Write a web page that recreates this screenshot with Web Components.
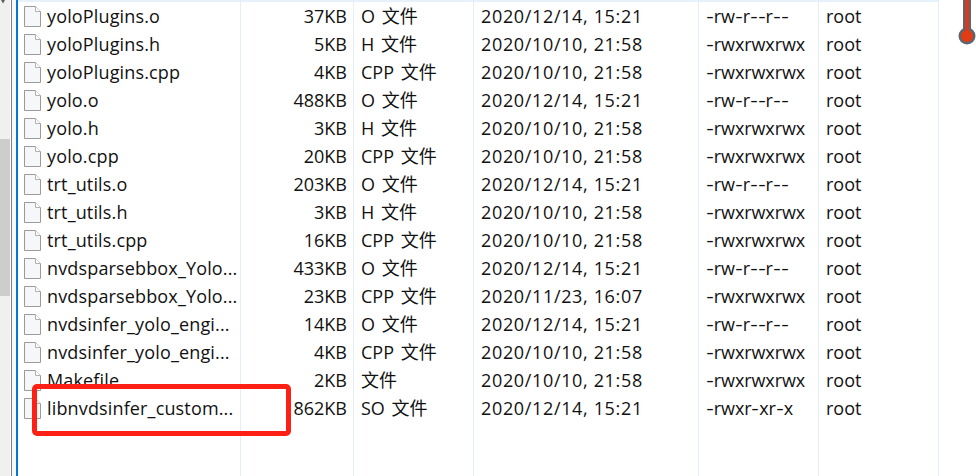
<!DOCTYPE html>
<html>
<head>
<meta charset="utf-8">
<style>
  html, body { margin: 0; height: 100%; background: #fff; overflow: hidden; }
</style>
</head>
<body>
<file-window></file-window>

<template id="tpl-row">
  <style>
    :host {
      display: grid;
      grid-template-columns: 241px 113px 120px 225px 120px 120px;
      height: 28px;
      align-items: center;
      font: 18px/24px "Open Sans", "Noto Sans CJK SC", sans-serif;
      color: #111;
      white-space: nowrap;
    }
    .name { display: flex; align-items: center; gap: 6px; padding-left: 24px; letter-spacing: .15px; }
    .size { text-align: right; padding-right: 7px; }
    .type, .date, .perm, .owner { padding-left: 7px; }
    .type { word-spacing: 2px; }
    .date { letter-spacing: .65px; }
    .perm { letter-spacing: -.1px; }
    .perm b { display: inline-block; width: 7.8px; font-weight: 400; letter-spacing: 0; text-align: center; transform: scaleX(1.3); }
    svg { flex: none; margin-top: 1px; }
  </style>
  <div class="name">
    <svg width="17" height="21" viewBox="0 0 17 21">
      <path d="M.5.5h11l5 5v15H.5z" fill="#f6f7f9" stroke="#9a9a9a"/>
      <path d="M11.5.5v5h5" fill="#fff" stroke="#b0b0b0"/>
    </svg>
    <span id="name"></span>
  </div>
  <div class="size" id="size"></div>
  <div class="type" id="type"></div>
  <div class="date" id="date"></div>
  <div class="perm" id="perm"></div>
  <div class="owner">root</div>
</template>

<template id="tpl-window">
  <style>
    :host { display: flex; height: 476px; position: relative; overflow: hidden; background: #fff; }
    .tree { flex: none; width: 10px; background: #f0f0f0; position: relative; }
    .tree .thumb { height: 157px; margin-top: 139px; background: #cdcdcd; }
    .tree svg { position: absolute; left: 0; top: 0; }
    .rule { flex: none; width: 1px; margin-left: 1px; background: #7f7f7f; box-shadow: 1px 0 0 #b5b5b5; }
    .gutter { flex: none; width: 4px; background: #f8f8f8; }
    .accent { flex: none; width: 2px; background: #0078d7; }
    .list { flex: none; width: 939px; position: relative; margin-left: -18px; }
    .head { height: 2px; margin-left: 18px; background: #e5f1fb; }
    .rows { position: relative; }
    .lines { position: absolute; inset: 0; display: grid; grid-template-columns: 241px 113px 120px 225px 120px 120px; }
    .lines i { border-right: 1px solid #e3eefa; }
    .mark {
      position: absolute; left: 32px; top: 384px; width: 249px; height: 42px;
      border: 5px solid #fe2015; border-radius: 5px;
    }
    .thermo { position: absolute; left: 958px; top: 0; }
  </style>
  <div class="tree">
    <svg width="6" height="5" viewBox="0 0 6 5"><path d="M1 0h4L3 3.500z" fill="#606060"/></svg>
    <div class="thumb"></div>
  </div>
  <div class="rule"></div>
  <div class="gutter"></div>
  <div class="accent"></div>
  <div class="list">
    <div class="lines"><i></i><i></i><i></i><i></i><i></i><i></i></div>
    <div class="head"></div>
    <div class="rows"><slot></slot></div>
  </div>
  <div class="mark"></div>
  <svg class="thermo" width="18" height="46" viewBox="0 0 18 46">
    <rect x="5" y="0" width="8" height="34" fill="#5c6670"/>
    <circle cx="9" cy="36" r="8.500" fill="#5c6670"/>
    <rect x="7" y="0" width="4" height="34" fill="#d9391c"/>
    <circle cx="9" cy="36" r="6" fill="#e23c14"/>
  </svg>
</template>

<script>
const files = [
  ["yoloPlugins.o", "37KB", "O 文件", "2020/12/14, 15:21", "-rw-r--r--"],
  ["yoloPlugins.h", "5KB", "H 文件", "2020/10/10, 21:58", "-rwxrwxrwx"],
  ["yoloPlugins.cpp", "4KB", "CPP 文件", "2020/10/10, 21:58", "-rwxrwxrwx"],
  ["yolo.o", "488KB", "O 文件", "2020/12/14, 15:21", "-rw-r--r--"],
  ["yolo.h", "3KB", "H 文件", "2020/10/10, 21:58", "-rwxrwxrwx"],
  ["yolo.cpp", "20KB", "CPP 文件", "2020/10/10, 21:58", "-rwxrwxrwx"],
  ["trt_utils.o", "203KB", "O 文件", "2020/12/14, 15:21", "-rw-r--r--"],
  ["trt_utils.h", "3KB", "H 文件", "2020/10/10, 21:58", "-rwxrwxrwx"],
  ["trt_utils.cpp", "16KB", "CPP 文件", "2020/10/10, 21:58", "-rwxrwxrwx"],
  ["nvdsparsebbox_Yolo...", "433KB", "O 文件", "2020/12/14, 15:21", "-rw-r--r--"],
  ["nvdsparsebbox_Yolo...", "23KB", "CPP 文件", "2020/11/23, 16:07", "-rwxrwxrwx"],
  ["nvdsinfer_yolo_engi...", "14KB", "O 文件", "2020/12/14, 15:21", "-rw-r--r--"],
  ["nvdsinfer_yolo_engi...", "4KB", "CPP 文件", "2020/10/10, 21:58", "-rwxrwxrwx"],
  ["Makefile", "2KB", "文件", "2020/10/10, 21:58", "-rwxrwxrwx"],
  ["libnvdsinfer_custom...", "862KB", "SO 文件", "2020/12/14, 15:21", "-rwxr-xr-x"],
];

class FileRow extends HTMLElement {
  connectedCallback() {
    const root = this.attachShadow({ mode: "open" });
    root.appendChild(document.getElementById("tpl-row").content.cloneNode(true));
    for (const key of ["name", "size", "type", "date"]) {
      root.getElementById(key).textContent = this.getAttribute(key);
    }
    // the hyphens of the mode string are wider in the original font
    root.getElementById("perm").innerHTML = this.getAttribute("perm").replace(/-/g, "<b>-</b>");
  }
}
customElements.define("file-row", FileRow);

class FileWindow extends HTMLElement {
  connectedCallback() {
    const root = this.attachShadow({ mode: "open" });
    root.appendChild(document.getElementById("tpl-window").content.cloneNode(true));
    for (const [name, size, type, date, perm] of files) {
      const row = document.createElement("file-row");
      row.setAttribute("name", name);
      row.setAttribute("size", size);
      row.setAttribute("type", type);
      row.setAttribute("date", date);
      row.setAttribute("perm", perm);
      this.appendChild(row);
    }
  }
}
customElements.define("file-window", FileWindow);
</script>
</body>
</html>
